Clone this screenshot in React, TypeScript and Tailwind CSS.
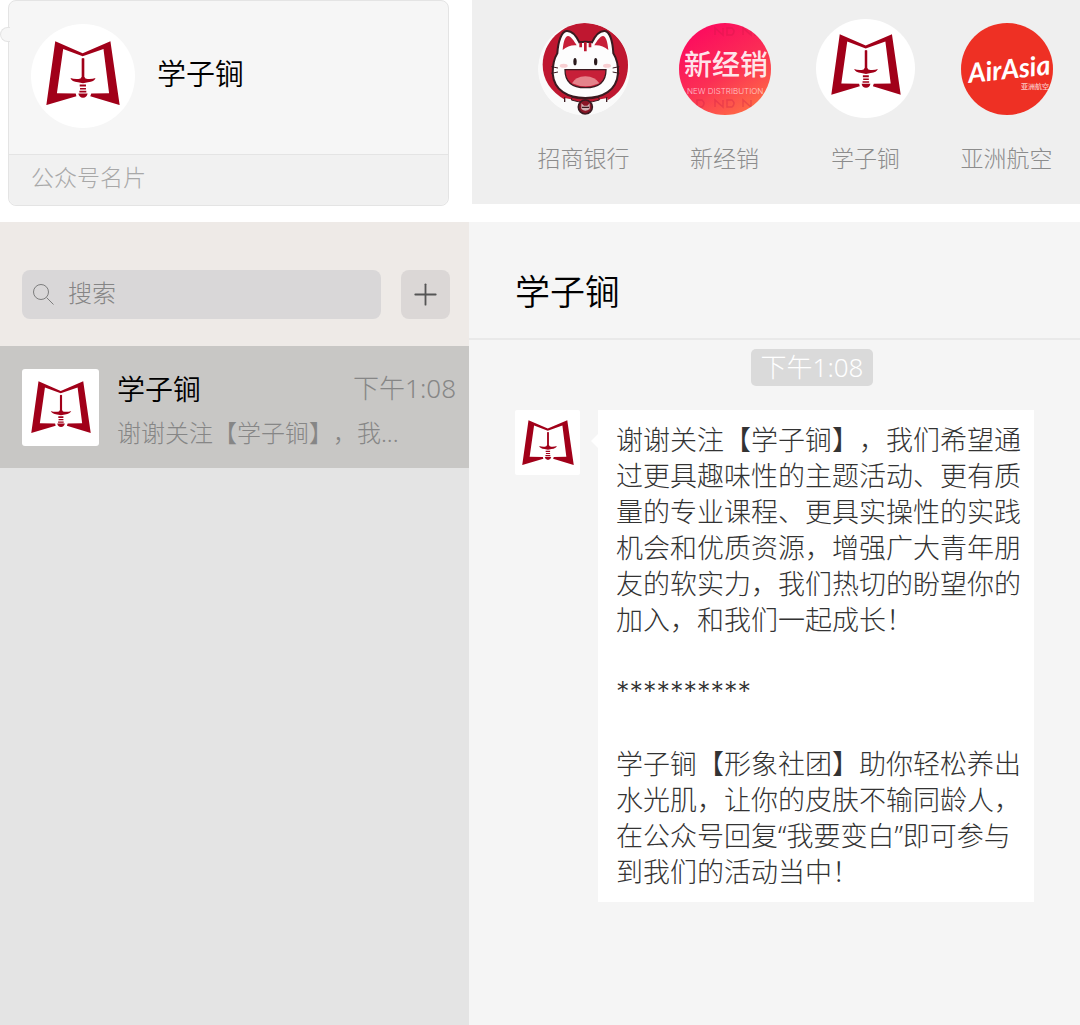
import { Plus } from 'lucide-react';
import type { ReactNode } from 'react';

function SwordMark({ className }: { className: string }) {
  return (
    <svg viewBox="32 30 224 195" className={className} fill="#a10019" aria-hidden="true">
      <path d="M60 31 143 67 227 31 255 224 166 197 169 189 223 188 206 54 143 76 84 54 65 188 122 189 124 197 33 224Z" />
      <path d="M140 83Q144 80 148 83V138Q150 145 158 145 172 146 182 142 178 153 159 155L144 158 129 155Q110 153 106 142 116 146 130 145 138 145 140 138Z" />
      <path d="M134 162h19v6h-19zM135 172h18v5h-18zM133 181h21v5h-21z" />
      <path d="M130 189h28q-2 12-14 13-12-1-14-13Z" />
    </svg>
  );
}

function BankLogo() {
  return (
    <svg viewBox="6 9 276 276" className="size-[92px]" aria-hidden="true">
      <defs>
        <clipPath id="bank-clip">
          <circle cx="144" cy="147" r="138" />
        </clipPath>
      </defs>
      <g clipPath="url(#bank-clip)">
        <circle cx="144" cy="147" r="138" fill="#fafafa" />
        <path
          d="M88 240Q20 200 20 134C20 66 80 9 148 9S276 66 276 134C276 190 246 226 210 242Z"
          fill="#bf1730"
        />
        <path d="M80 290 86 234Q148 250 214 234L220 290Z" fill="#fafafa" />
        <path
          d="M64 100C66 66 76 34 92 33S120 46 130 67Q148 63 168 67C178 46 190 32 206 33S230 66 232 100C242 116 247 136 246 160C242 212 200 234 148 234S54 212 50 160C50 136 54 116 64 100Z"
          fill="#fdfdfd"
          stroke="#3a1a20"
          strokeWidth="6"
        />
        <path
          d="M80 90C82 64 88 48 96 48S114 62 122 76Q98 74 80 90ZM217 90C215 64 209 48 201 48S183 62 175 76Q199 74 217 90Z"
          fill="#c71f38"
        />
        <path d="M134 68v14M148 66v28M162 68v14" stroke="#bf1730" strokeWidth="8" />
        <ellipse cx="117" cy="125" rx="5" ry="11" fill="#2a1a1c" />
        <ellipse cx="179" cy="125" rx="5" ry="11" fill="#2a1a1c" />
        <ellipse cx="83" cy="137" rx="12" ry="6" fill="#f8cfd2" />
        <ellipse cx="213" cy="137" rx="12" ry="6" fill="#f8cfd2" />
        <path d="M46 140 66 144M46 160 66 156M250 140 230 144M250 160 230 156" stroke="#3a1a20" strokeWidth="3" />
        <path
          d="M87 149H210C210 186 186 203 148 203S87 186 87 149Z"
          fill="#c71f38"
          stroke="#3a1a20"
          strokeWidth="4"
        />
        <path d="M108 190Q118 170 148 169 178 170 190 190 148 208 108 190Z" fill="#e5838b" />
        <path d="M108 232Q148 242 188 232L190 240Q148 254 106 240Z" fill="#bf1730" stroke="#3a1a20" strokeWidth="3" />
        <path d="M86 232v14M212 232v14" stroke="#3a1a20" strokeWidth="4" />
        <circle cx="148" cy="261" r="21" fill="#8a1526" stroke="#3a1a20" strokeWidth="5" />
        <path d="M136 250 144 257H154L161 250V267Q148 278 136 267Z" fill="#d3b3b5" />
        <path d="M138 262h21" stroke="#3a1a20" strokeWidth="4" />
      </g>
    </svg>
  );
}

function DistributionLogo() {
  return (
    <svg viewBox="0 0 92 92" className="size-[92px]" aria-hidden="true">
      <defs>
        <linearGradient id="dist-fill" x1="0.2" y1="0.1" x2="0.75" y2="1">
          <stop offset="0" stopColor="#fc0d5e" />
          <stop offset="0.5" stopColor="#fb2e55" />
          <stop offset="1" stopColor="#ff6d45" />
        </linearGradient>
        <clipPath id="dist-clip">
          <circle cx="46" cy="46" r="46" />
        </clipPath>
      </defs>
      <g clipPath="url(#dist-clip)">
        <rect width="92" height="92" fill="url(#dist-fill)" />
        <g fill="none" stroke="#c81846" strokeOpacity="0.3" strokeWidth="1.5">
          <path d="M36 12V5l8 7V5M48 5h5q4 3.500 0 7h-5zM64 12V5l8 7V5M76 5h5q4 3.500 0 7h-5z" />
          <path d="M36 84v-7l8 7v-7M48 77h5q4 3.500 0 7h-5zM64 84v-7l8 7v-7M18 77h5q4 3.500 0 7h-5z" />
        </g>
        <g fill="#fff" className="[font-family:'Noto_Sans_CJK_SC',sans-serif]">
          <text x="5" y="52" fontSize="28" fontWeight="500" fillOpacity="0.9">
            新经销
          </text>
          <text x="8" y="71" fontSize="8" fontWeight="300" fillOpacity="0.7" className="[font-family:Inter,sans-serif]">
            NEW DISTRIBUTION
          </text>
        </g>
      </g>
    </svg>
  );
}

function AirAsiaLogo() {
  return (
    <svg viewBox="0 0 92 92" className="size-[92px]" aria-hidden="true">
      <circle cx="46" cy="46" r="46" fill="#ee3024" />
      <g fill="#fff">
        <text
          x="8"
          y="60"
          fontSize="27"
          fontStyle="italic"
          fontWeight="700"
          transform="rotate(-6 8 60)"
          className="[font-family:Lato,sans-serif]"
        >
          Air<tspan dx="1">Asia</tspan>
        </text>
        <text x="60" y="66" fontSize="7" fontWeight="500" fillOpacity="0.75" className="[font-family:'Noto_Sans_CJK_SC',sans-serif]">
          亚洲航空
        </text>
      </g>
    </svg>
  );
}

const accounts: { name: string; logo: ReactNode }[] = [
  { name: '招商银行', logo: <BankLogo /> },
  { name: '新经销', logo: <DistributionLogo /> },
  {
    name: '学子锏',
    logo: (
      <span className="flex size-[99px] items-center justify-center rounded-full bg-white pb-2">
        <SwordMark className="w-[70px]" />
      </span>
    ),
  },
  { name: '亚洲航空', logo: <AirAsiaLogo /> },
];

function ProfileCard() {
  return (
    <section className="relative ml-2 min-w-0 rounded-lg border border-[#e4e4e4] bg-[#f6f6f6]">
      <span className="absolute top-[26px] -left-[9px] h-[15px] w-[10px] rounded-l-full border border-r-0 border-[#e4e4e4] bg-[#f6f6f6]" />
      <div className="flex items-center gap-[22px] px-[22px] pt-[23px] pb-[26px]">
        <span className="flex size-[104px] items-center justify-center rounded-full bg-white pb-[6px]">
          <SwordMark className="w-[74px]" />
        </span>
        <h2 className="pb-1 text-[29px] leading-9">学子锏</h2>
      </div>
      <p className="rounded-b-lg border-t border-[#e4e4e4] bg-[#f1f1f1] px-[22px] pt-1 pb-[10px] text-[23px] leading-9 font-light text-[#a8a8a8]">
        公众号名片
      </p>
    </section>
  );
}

function AccountStrip() {
  return (
    <ul className="mb-[2px] grid min-w-0 grid-cols-4 bg-[#efefef] pt-[19px] pr-[3px] pl-[41px]">
      {accounts.map((account) => (
        <li key={account.name} className="flex flex-col items-center gap-[22px]">
          <div className="flex h-[99px] items-center">{account.logo}</div>
          <span className="text-[23px] leading-9 font-light text-[#8c8c8c]">{account.name}</span>
        </li>
      ))}
    </ul>
  );
}

function Sidebar() {
  return (
    <aside className="min-w-0 bg-[#e4e4e4]">
      <div className="flex gap-5 bg-[#eeeae7] pt-12 pr-[19px] pb-[27px] pl-[22px]">
        <label className="flex h-[49px] min-w-0 flex-1 items-center gap-3 rounded-lg bg-[#d9d7d8] pl-[10px]">
          <svg viewBox="0 0 24 24" className="size-6 shrink-0" fill="none" stroke="#7d7d7d" aria-hidden="true">
            <circle cx="9" cy="9" r="7.500" />
            <path d="m14.500 14.500 7 7" />
          </svg>
          <input
            type="search"
            aria-label="搜索"
            placeholder="搜索"
            className="min-w-0 flex-1 bg-transparent pb-1 text-2xl font-light outline-none placeholder:text-[#858585]"
          />
        </label>
        <button type="button" aria-label="添加" className="flex size-[49px] items-center justify-center rounded-lg bg-[#dbd7d6] text-[#555]">
          <Plus size={35} strokeWidth={1.25} />
        </button>
      </div>
      <a href="#chat" className="flex items-center gap-[18px] bg-[#c8c7c5] py-[14px] pr-[13px] pl-[22px]">
        <span className="flex size-[77px] shrink-0 items-center justify-center rounded-[3px] bg-white">
          <SwordMark className="w-[60px]" />
        </span>
        <span className="min-w-0 flex-1 pt-2">
          <span className="flex items-center justify-between leading-[43px]">
            <span className="text-[28px]">学子锏</span>
            <time className="pb-1 text-[26px] leading-9 font-light text-[#868686]">下午1:08</time>
          </span>
          <span className="block truncate text-2xl leading-[43px] font-light text-[#868686]">谢谢关注【学子锏】，我...</span>
        </span>
      </a>
    </aside>
  );
}

function Chat() {
  return (
    <main id="chat" className="min-w-0 bg-[#f5f5f5]">
      <header className="border-b-2 border-[#e9e9e9] px-[46px] pt-[46px] pb-[23px]">
        <h1 className="text-[35px] leading-[47px]">学子锏</h1>
      </header>
      <div className="flex justify-center pt-[9px] pl-[75px]">
        <time className="rounded-[5px] bg-[#dadada] px-[10px] text-[26px] leading-[37px] font-light text-white">下午1:08</time>
      </div>
      <div className="flex items-start gap-[18px] px-[46px] pt-6">
        <span className="flex size-[65px] shrink-0 items-center justify-center rounded-[2px] bg-white">
          <SwordMark className="w-[52px]" />
        </span>
        <article className="relative min-w-0 flex-1 bg-white py-3 pr-2 pl-[18px] text-[27px] leading-9 font-light text-[#333]">
          <span className="absolute top-[23px] -left-[7px] h-4 w-2 bg-white [clip-path:polygon(100%_0,0_50%,100%_100%)]" />
          <p>谢谢关注【学子锏】，我们希望通过更具趣味性的主题活动、更有质量的专业课程、更具实操性的实践机会和优质资源，增强广大青年朋友的软实力，我们热切的盼望你的加入，和我们一起成长！</p>
          <p className="my-9 [font-family:Inter,sans-serif]">**********</p>
          <p>学子锏【形象社团】助你轻松养出水光肌，让你的皮肤不输同龄人，在公众号回复“我要变白”即可参与到我们的活动当中！</p>
        </article>
      </div>
    </main>
  );
}

export default function App() {
  return (
    <div
      lang="zh-CN"
      className="flex min-h-screen flex-col bg-white font-[350] text-black [font-family:'Noto_Sans','Noto_Sans_CJK_SC',sans-serif] [text-spacing-trim:space-all]"
    >
      <div className="grid grid-cols-[449fr_608fr] gap-x-[23px] pb-4">
        <ProfileCard />
        <AccountStrip />
      </div>
      <div className="grid flex-1 grid-cols-[469fr_611fr]">
        <Sidebar />
        <Chat />
      </div>
    </div>
  );
}
